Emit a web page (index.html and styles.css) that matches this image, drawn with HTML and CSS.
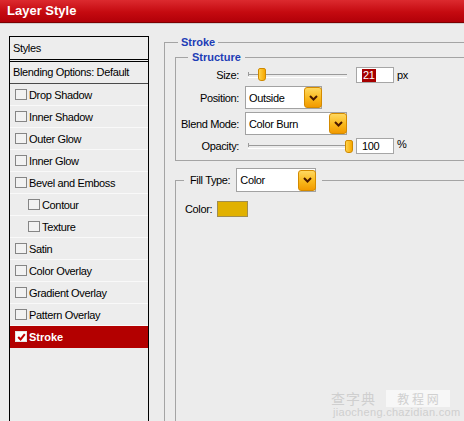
FILE: index.html
```html
<!DOCTYPE html>
<html lang="en">
<head>
<meta charset="utf-8">
<title>Layer Style</title>
<link rel="stylesheet" href="styles.css">
</head>
<body>
  <header class="titlebar">Layer Style</header>
  <div class="dialog">
    <aside class="styles-panel">
      <div class="panel-head">Styles</div>
      <div class="panel-blend">Blending Options: Default</div>
      <ul class="effects">
        <li class="effect"><span class="cb"></span>Drop Shadow</li>
        <li class="effect"><span class="cb"></span>Inner Shadow</li>
        <li class="effect"><span class="cb"></span>Outer Glow</li>
        <li class="effect"><span class="cb"></span>Inner Glow</li>
        <li class="effect"><span class="cb"></span>Bevel and Emboss</li>
        <li class="effect sub"><span class="cb"></span>Contour</li>
        <li class="effect sub"><span class="cb"></span>Texture</li>
        <li class="effect"><span class="cb"></span>Satin</li>
        <li class="effect"><span class="cb"></span>Color Overlay</li>
        <li class="effect"><span class="cb"></span>Gradient Overlay</li>
        <li class="effect"><span class="cb"></span>Pattern Overlay</li>
        <li class="effect active"><span class="cb checked"><svg width="9" height="8" viewBox="0 0 9 8"><path d="M1.2 4 L3.6 6.4 L7.8 1.2" fill="none" stroke="#c00000" stroke-width="2"/></svg></span>Stroke</li>
      </ul>
    </aside>

    <main class="settings">
      <fieldset class="group group-stroke">
        <legend class="legend-blue">Stroke</legend>

        <fieldset class="group group-structure">
          <legend class="legend-blue legend-structure">Structure</legend>
          <div class="form">
            <span class="lbl">Size:</span>
            <div class="ctrl">
              <div class="slider"><span class="thumb thumb-size"></span></div>
              <div class="num"><span class="sel-text">21</span></div>
              <span class="unit">px</span>
            </div>

            <span class="lbl">Position:</span>
            <div class="ctrl">
              <div class="select select-pos"><span class="select-text">Outside</span><span class="dd"><svg width="9" height="6" viewBox="0 0 9 6"><path d="M1 1 L4.5 4.5 L8 1" fill="none" stroke="#4a1800" stroke-width="2"/></svg></span></div>
            </div>

            <span class="lbl">Blend Mode:</span>
            <div class="ctrl">
              <div class="select select-blend"><span class="select-text">Color Burn</span><span class="dd"><svg width="9" height="6" viewBox="0 0 9 6"><path d="M1 1 L4.5 4.5 L8 1" fill="none" stroke="#4a1800" stroke-width="2"/></svg></span></div>
            </div>

            <span class="lbl">Opacity:</span>
            <div class="ctrl">
              <div class="slider"><span class="thumb thumb-opacity"></span></div>
              <div class="num">100</div>
              <span class="unit unit-pct">%</span>
            </div>
          </div>
        </fieldset>

        <fieldset class="group group-fill">
          <legend class="legend-fill">
            <span class="fill-label">Fill Type:</span>
            <span class="select select-fill"><span class="select-text">Color</span><span class="dd"><svg width="9" height="6" viewBox="0 0 9 6"><path d="M1 1 L4.5 4.5 L8 1" fill="none" stroke="#4a1800" stroke-width="2"/></svg></span></span>
          </legend>
          <div class="color-row">
            <span class="color-label">Color:</span>
            <span class="swatch"></span>
          </div>
        </fieldset>
      </fieldset>
    </main>
  </div>

  <div class="watermark">
    <div class="wm-top"><span class="wm-cn">查字典</span><span class="wm-box">教 程 网</span></div>
    <div class="wm-url">jiaocheng.chazidian.com</div>
  </div>
</body>
</html>
```

FILE: styles.css
```css
* { box-sizing: border-box; }

html, body { margin: 0; padding: 0; }

body {
  width: 464px;
  height: 421px;
  overflow: hidden;
  position: relative;
  background: #ececec;
  font-family: "Liberation Sans", Arial, sans-serif;
  font-size: 11px;
  letter-spacing: -0.35px;
  color: #000;
}

.titlebar {
  height: 23px;
  padding-left: 7px;
  line-height: 22px;
  font-size: 13px;
  font-weight: bold;
  letter-spacing: 0;
  color: #fff;
  background: linear-gradient(#dc2a2f, #c50a10 55%, #b20008);
  border-bottom: 1px solid #7c0000;
  box-shadow: 0 1px 0 #cfcfcf;
}

.dialog {
  display: flex;
  align-items: flex-start;
  padding: 13px 0 0 9px;
}

/* ---------- left styles list ---------- */
.styles-panel {
  flex: none;
  width: 140px;
  height: 386px;
  border: 1px solid #000;
  background: #ededed;
}

.panel-head {
  height: 25px;
  line-height: 22px;
  padding-left: 3px;
  border-bottom: 3px double #000;
}

.panel-blend {
  height: 22px;
  line-height: 21px;
  padding-left: 3px;
  border-bottom: 1px solid #4a4a4a;
}

.effects {
  list-style: none;
  margin: 0;
  padding: 0;
}

.effect {
  display: flex;
  align-items: center;
  height: 22px;
  border-bottom: 1px solid #f9f9f9;
}

.cb {
  flex: none;
  display: flex;
  align-items: center;
  justify-content: center;
  width: 12px;
  height: 11px;
  margin: 0 2px 0 5px;
  border: 1px solid #858585;
  background: #f2f2f2;
}

.effect.sub .cb { margin-left: 18px; }

.effect.active {
  background: #b30000;
  color: #fff;
  font-weight: bold;
  letter-spacing: 0;
  border-bottom-color: #b30000;
}

.cb.checked {
  background: #fff;
  border-color: #e6e6e6;
}

/* ---------- right settings ---------- */
.settings {
  flex: 1;
  min-width: 0;
  margin-left: 15px;
}

.group {
  margin: 0;
  min-width: 0;
  border: 1px solid #a4a4a4;
  border-right: none;
}

.group-stroke {
  width: 320px;
  height: 400px;
  padding: 0 0 0 10px;
}

.legend-blue {
  padding: 0 3px;
  margin-left: 3px;
  line-height: 13px;
  font-weight: bold;
  letter-spacing: 0;
  color: #1d3db6;
}

.group-structure {
  margin-top: 2px;
  padding: 2px 0 6px 0;
}

.legend-structure {
  margin-left: 12px;
  padding: 0 4px;
}

.form {
  display: grid;
  grid-template-columns: 63px auto;
  grid-template-rows: 17px 23px 23px 16px;
  column-gap: 6px;
  row-gap: 3px;
}

.lbl {
  align-self: center;
  text-align: right;
}

.ctrl {
  display: flex;
  align-items: center;
}

.slider {
  position: relative;
  flex: none;
  width: 108px;
  height: 16px;
  margin-left: 3px;
}

.slider::before {
  content: "";
  position: absolute;
  left: 0;
  top: 7px;
  width: 99px;
  height: 2px;
  border-top: 1px solid #9a9a9a;
  border-bottom: 1px solid #fff;
}

.slider::after {
  content: "";
  position: absolute;
  left: 0;
  top: 5px;
  width: 1px;
  height: 4px;
  background: #9a9a9a;
}

.thumb {
  position: absolute;
  top: 1px;
  width: 8px;
  height: 13px;
  border: 1px solid #d08a00;
  border-radius: 2px 2px 3px 3px;
  background: linear-gradient(90deg, #ffd24a, #f7a800);
  z-index: 1;
}

.thumb-size { left: 10px; }
.thumb-opacity { left: 97px; top: 2px; }

.num {
  flex: none;
  width: 38px;
  height: 16px;
  padding-left: 5px;
  line-height: 14px;
  border: 1px solid #a6a6a6;
  background: #fff;
}

.sel-text {
  display: inline-block;
  background: #a60000;
  color: #fff;
  padding: 0 1px;
  line-height: 13px;
}

.unit { margin-left: 3px; }
.unit-pct { margin-top: -4px; }

.select {
  display: flex;
  align-items: center;
  height: 23px;
  padding-left: 3px;
  border: 1px solid #a2a2a2;
  background: #fff;
}

.select-pos { width: 77px; }
.select-blend { width: 102px; }
.select-fill { width: 80px; height: 24px; }

.select-text {
  flex: 1;
  white-space: nowrap;
}

.dd {
  flex: none;
  display: flex;
  align-items: center;
  justify-content: center;
  width: 18px;
  height: 21px;
  margin-right: -1px;
  border: 1px solid #d48b00;
  border-radius: 3px;
  background: linear-gradient(#ffd860, #f9b81c 55%, #f29a00);
}

.group-fill {
  margin-top: 7px;
  height: 300px;
  padding: 9px 0 0 9px;
}

.legend-fill {
  display: flex;
  align-items: center;
  margin-left: -1px;
  padding: 0 6px;
}

.fill-label { margin-right: 6px; }

.color-row {
  display: flex;
  align-items: center;
}

.color-label { width: 32px; }

.swatch {
  width: 31px;
  height: 16px;
  border: 1px solid #a08d50;
  background: #e1b100;
}

/* ---------- watermark overlay ---------- */
.watermark {
  position: absolute;
  left: 331px;
  top: 389px;
  color: #cfcfcf;
  letter-spacing: 0;
  font-family: "Noto Sans CJK SC", sans-serif;
}

.wm-top {
  display: flex;
  align-items: center;
  height: 18px;
}

.wm-cn {
  font-size: 14px;
  line-height: 16px;
  letter-spacing: 1px;
  width: 55px;
}

.wm-box {
  width: 64px;
  height: 17px;
  line-height: 17px;
  font-size: 12px;
  text-align: center;
  background: #f7f7f7;
  color: #d0d0d0;
}

.wm-url {
  font-family: "Liberation Sans", Arial, sans-serif;
  font-size: 11px;
  line-height: 11px;
  letter-spacing: 0.3px;
  padding-left: 2px;
}
```
